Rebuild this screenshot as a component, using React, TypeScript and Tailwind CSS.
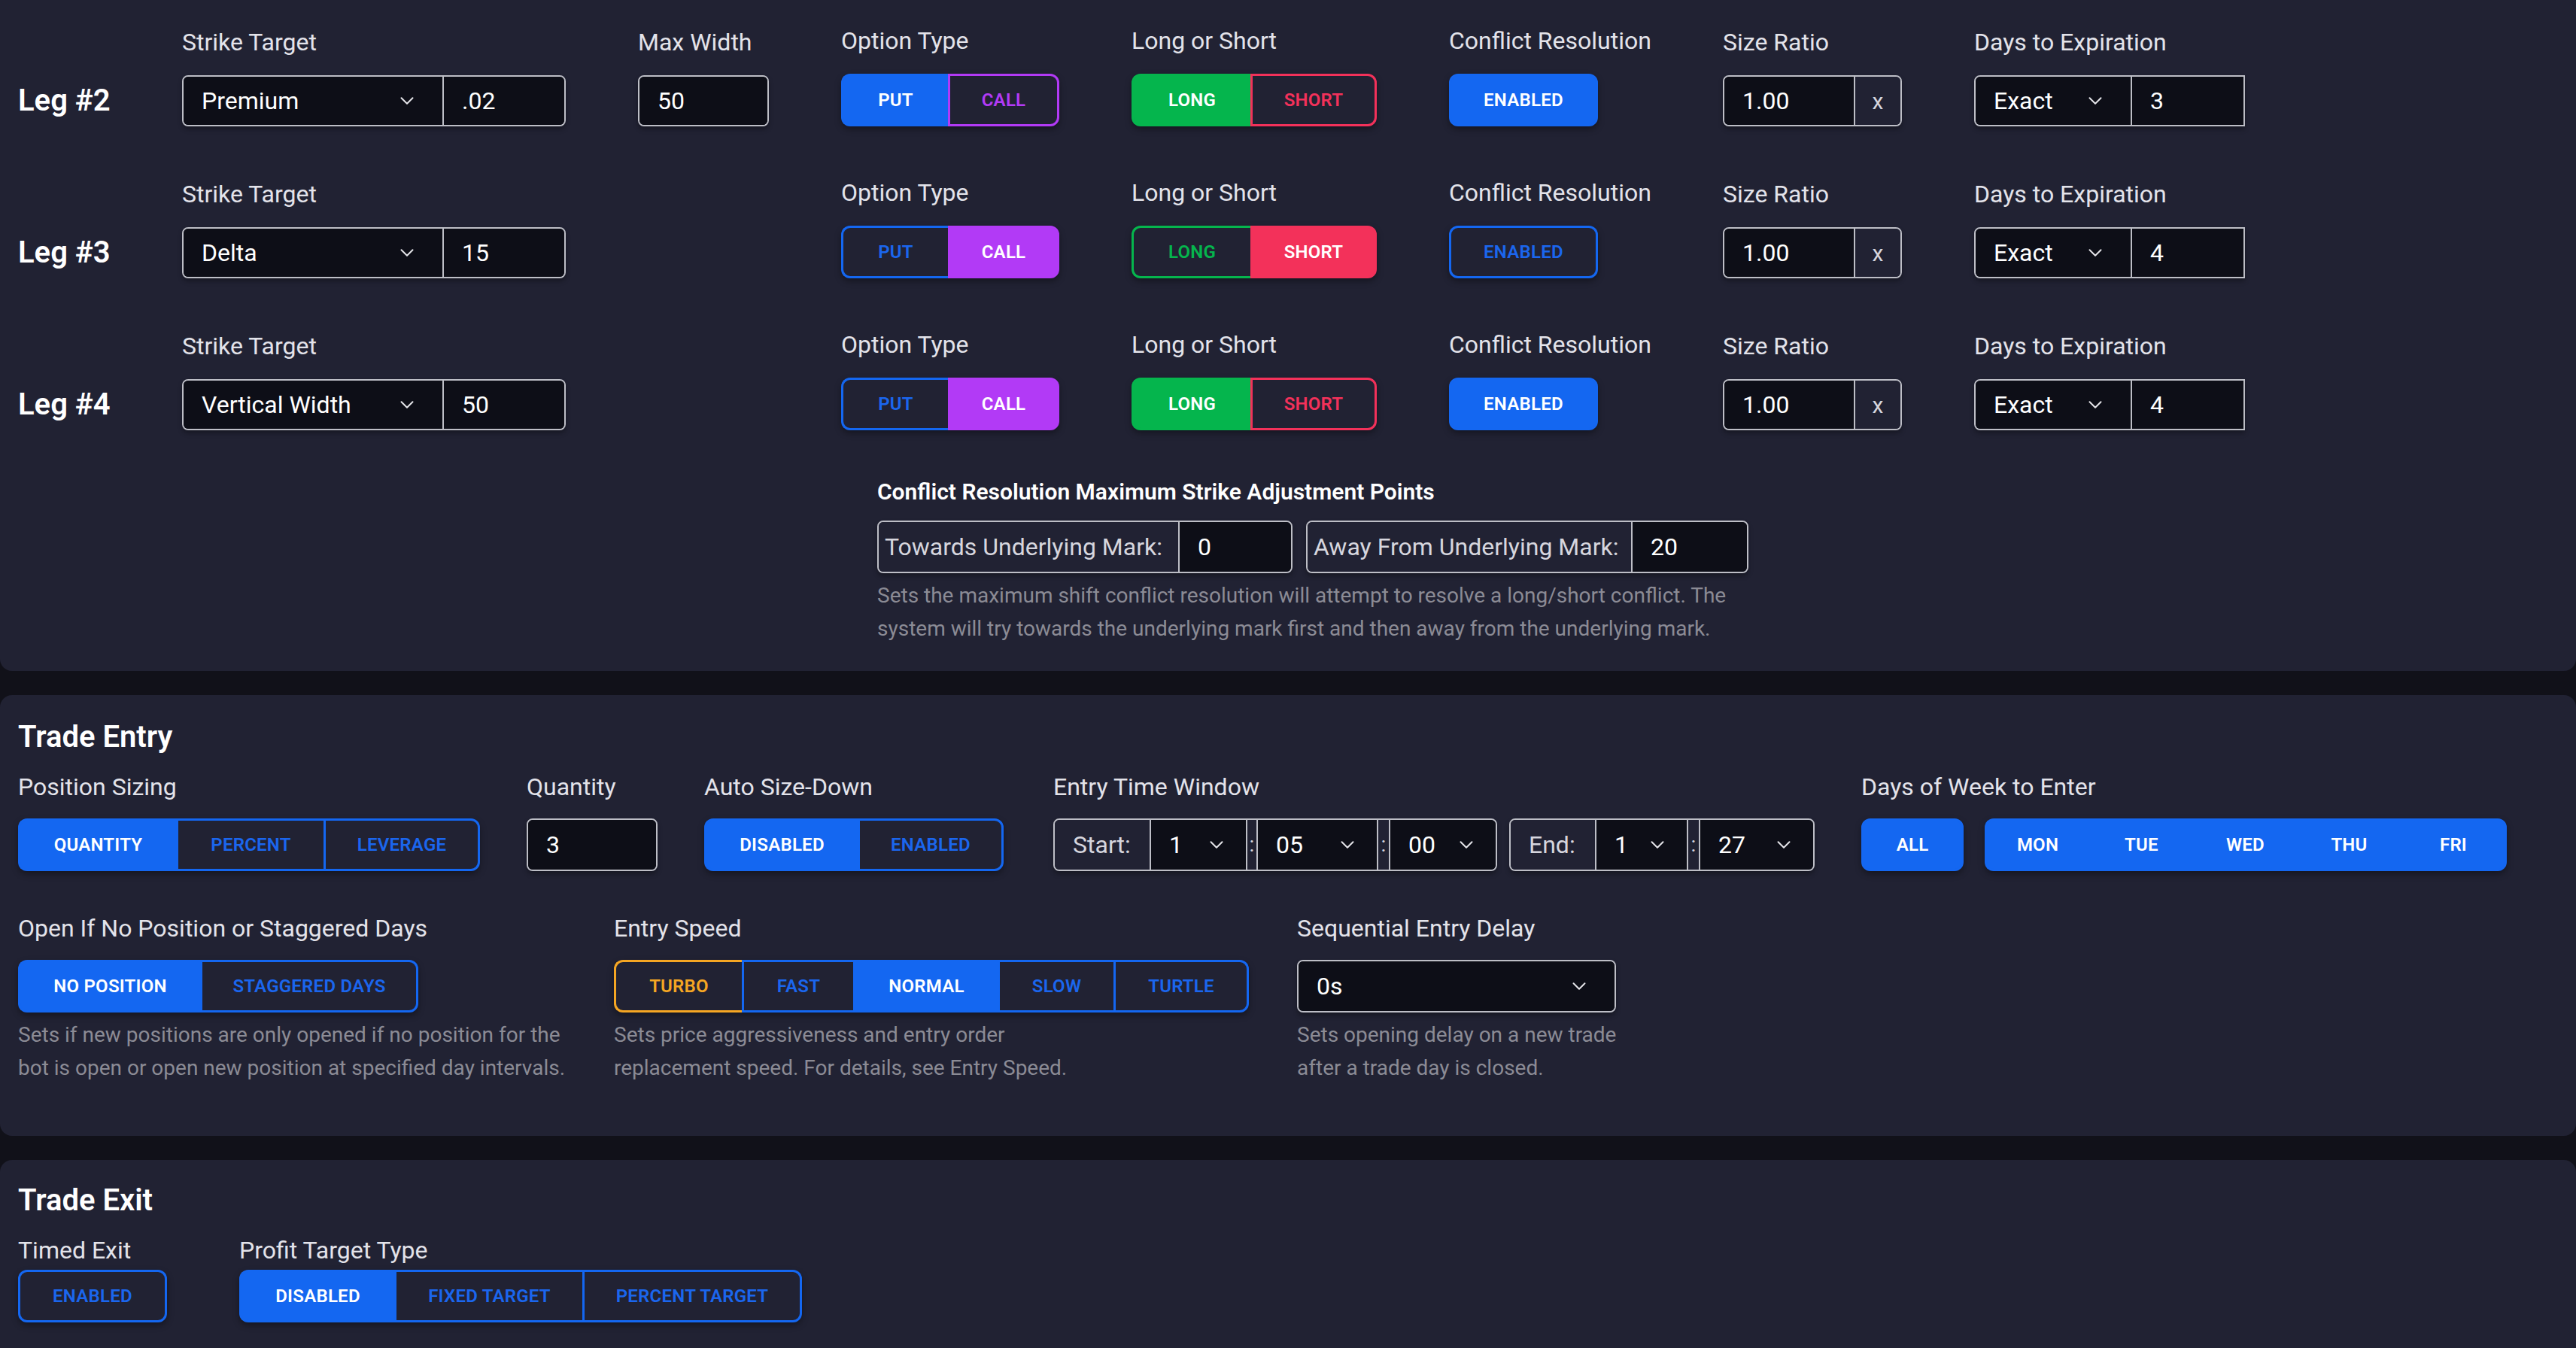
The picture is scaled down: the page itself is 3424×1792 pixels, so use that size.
import React from "react";
import { ChevronDown } from "lucide-react";

type V = "bf" | "bo" | "pf" | "po" | "gf" | "go" | "rf" | "ro" | "ao";
const VC: Record<V, string> = {
  bf: "bg-[#1467f1] border-[#1467f1] text-white",
  bo: "border-[#1467f1] text-[#1b66ee]",
  pf: "bg-[#b23af6] border-[#b23af6] text-white",
  po: "border-[#b23af6] text-[#b23af6]",
  gf: "bg-[#05b54d] border-[#05b54d] text-white",
  go: "border-[#05b54d] text-[#05b54d]",
  rf: "bg-[#f3315a] border-[#f3315a] text-white",
  ro: "border-[#f3315a] text-[#f3315a]",
  ao: "border-[#f5a623] text-[#f5a623]",
};

type Item = { t: string; v: V; w: string };

function Seg({ items, h = "h-[35px]" }: { items: Item[]; h?: string }) {
  return (
    <div className={`flex w-fit self-start ${h} rounded-md shadow-[0_2px_4px_rgba(0,0,0,0.35)]`}>
      {items.map((it, i) => {
        const first = i === 0;
        const last = i === items.length - 1;
        return (
          <div
            key={i}
            className={`flex items-center justify-center border-[1.5px] text-[12px] font-semibold tracking-[0.01em] ${it.w} ${VC[it.v]} ${first ? "rounded-l-md" : ""} ${last ? "rounded-r-md" : "border-r-0"}`}
          >
            {it.t}
          </div>
        );
      })}
    </div>
  );
}

function Label({ children, cls = "mb-[10px]" }: { children: React.ReactNode; cls?: string }) {
  return <div className={`text-[16px] leading-6 text-[#e3e3ea] whitespace-nowrap ${cls}`}>{children}</div>;
}

function Frame({ children, cls = "" }: { children: React.ReactNode; cls?: string }) {
  return (
    <div className={`flex h-[34px] rounded-[4px] border border-[#bdbec6] overflow-hidden shadow-[0_2px_3px_rgba(0,0,0,0.3)] ${cls}`}>
      {children}
    </div>
  );
}

function Sel({ v, w, pr = "pr-4", bl = "" }: { v: string; w: string; pr?: string; bl?: string }) {
  return (
    <div className={`flex items-center justify-between bg-[#0d0e17] pl-3 ${pr} text-[16px] text-white ${w} ${bl}`}>
      <span>{v}</span>
      <ChevronDown size={15} strokeWidth={1.6} className="text-[#e5e5ea]" />
    </div>
  );
}

function Num({ v, w }: { v: string; w: string }) {
  return (
    <div className={`flex items-center bg-[#0d0e17] pl-3 text-[16px] text-white border-l border-[#bdbec6] ${w}`}>{v}</div>
  );
}

function Addon({ t, w, cls = "" }: { t: string; w: string; cls?: string }) {
  return (
    <div className={`flex items-center bg-[#212233] text-[16px] text-[#d6d6de] ${w} ${cls}`}>{t}</div>
  );
}

function Colon({ w }: { w: string }) {
  return (
    <div className={`flex items-center justify-center ${w} bg-[#212233] text-[14px] text-[#d6d6de] border-l border-[#bdbec6]`}>:</div>
  );
}

type LegProps = {
  n: string;
  strike: string;
  sv: string;
  maxw?: string;
  put: boolean;
  long: boolean;
  conflict: boolean;
  dte: string;
};

function Leg({ n, strike, sv, maxw, put, long, conflict, dte }: LegProps) {
  return (
    <div className="flex items-end gap-12">
      <div className="flex items-center h-[34px] w-[61px] text-[20px] font-semibold text-white whitespace-nowrap">Leg #{n}</div>
      <div className="flex flex-col w-[255px]">
        <Label>Strike Target</Label>
        <Frame>
          <Sel v={strike} w="w-[172px]" />
          <Num v={sv} w="flex-1" />
        </Frame>
      </div>
      <div className="flex flex-col w-[87px]">
        {maxw !== undefined && (
          <>
            <Label>Max Width</Label>
            <Frame>
              <div className="flex items-center flex-1 bg-[#0d0e17] pl-3 text-[16px] text-white">{maxw}</div>
            </Frame>
          </>
        )}
      </div>
      <div className="flex flex-col w-[145px]">
        <Label>Option Type</Label>
        <Seg
          items={[
            { t: "PUT", v: put ? "bf" : "bo", w: "w-[71px]" },
            { t: "CALL", v: put ? "po" : "pf", w: "w-[74px]" },
          ]}
        />
      </div>
      <div className="flex flex-col w-[163px]">
        <Label>Long or Short</Label>
        <Seg
          items={[
            { t: "LONG", v: long ? "gf" : "go", w: "w-[79px]" },
            { t: "SHORT", v: long ? "ro" : "rf", w: "w-[84px]" },
          ]}
        />
      </div>
      <div className="flex flex-col w-[134px]">
        <Label>Conflict Resolution</Label>
        <Seg items={[{ t: "ENABLED", v: conflict ? "bf" : "bo", w: "w-[99px]" }]} />
      </div>
      <div className="flex flex-col w-[119px]">
        <Label>Size Ratio</Label>
        <Frame>
          <div className="flex items-center flex-1 bg-[#0d0e17] pl-3 text-[16px] text-white">1.00</div>
          <div className="flex items-center justify-center w-[31px] border-l border-[#bdbec6] bg-[#212233] text-[15px] text-[#d6d6de]">x</div>
        </Frame>
      </div>
      <div className="flex flex-col w-[180px]">
        <Label>Days to Expiration</Label>
        <Frame cls="rounded-r-none">
          <Sel v="Exact" w="w-[103px]" />
          <Num v={dte} w="flex-1" />
        </Frame>
      </div>
    </div>
  );
}

const helper = "text-[14px] leading-[22px] text-[#8b8b95] whitespace-nowrap";
const bl = "border-l border-[#bdbec6]";

export default function App() {
  return (
    <div className="[zoom:2] w-[1712px] min-h-[896px] bg-[#111119] [font-family:Roboto,'Noto_Sans',sans-serif] flex flex-col gap-[16px]">
      {/* Legs panel */}
      <div className="bg-[#212233] rounded-b-lg px-3 pt-[15px] pb-[17px]">
        <div className="flex flex-col gap-[32px]">
          <Leg n="2" strike="Premium" sv=".02" maxw="50" put long conflict dte="3" />
          <Leg n="3" strike="Delta" sv="15" put={false} long={false} conflict={false} dte="4" />
          <Leg n="4" strike="Vertical Width" sv="50" put={false} long conflict dte="4" />
        </div>
        <div className="ml-[571px] mt-[30px]">
          <div className="text-[15px] leading-[22px] font-semibold text-white">Conflict Resolution Maximum Strike Adjustment Points</div>
          <div className="flex gap-[9px] mt-2">
            <Frame cls="h-[35px]">
              <Addon t="Towards Underlying Mark:" w="w-[199px]" cls="pl-1" />
              <Num v="0" w="w-[75px]" />
            </Frame>
            <Frame cls="h-[35px]">
              <Addon t="Away From Underlying Mark:" w="w-[215px]" cls="pl-1" />
              <Num v="20" w="w-[77px]" />
            </Frame>
          </div>
          <div className={`${helper} mt-1`}>
            Sets the maximum shift conflict resolution will attempt to resolve a long/short conflict. The
            <br />
            system will try towards the underlying mark first and then away from the underlying mark.
          </div>
        </div>
      </div>

      {/* Trade Entry */}
      <div className="bg-[#212233] rounded-lg px-3 pt-[14px] pb-[34px]">
        <div className="text-[20px] leading-7 font-semibold text-white">Trade Entry</div>
        <div className="flex items-end gap-[31px] mt-[7px]">
          <div className="flex flex-col">
            <Label cls="mb-[9px]">Position Sizing</Label>
            <Seg
              items={[
                { t: "QUANTITY", v: "bf", w: "w-[105px]" },
                { t: "PERCENT", v: "bo", w: "w-[98px]" },
                { t: "LEVERAGE", v: "bo", w: "w-[104px]" },
              ]}
            />
          </div>
          <div className="flex flex-col">
            <Label cls="mb-[9px]">Quantity</Label>
            <Frame cls="w-[87px] h-[35px]">
              <div className="flex items-center flex-1 bg-[#0d0e17] pl-3 text-[16px] text-white">3</div>
            </Frame>
          </div>
          <div className="flex flex-col">
            <Label cls="mb-[9px]">Auto Size-Down</Label>
            <Seg
              items={[
                { t: "DISABLED", v: "bf", w: "w-[102px]" },
                { t: "ENABLED", v: "bo", w: "w-[97px]" },
              ]}
            />
          </div>
          <div className="flex flex-col ml-[2px]">
            <Label cls="mb-[9px]">Entry Time Window</Label>
            <div className="flex gap-2">
              <Frame cls="h-[35px]">
                <Addon t="Start:" w="w-[63px]" cls="pl-3" />
                <Sel v="1" w="w-[64px]" pr="pr-3" bl={bl} />
                <Colon w="w-[7px]" />
                <Sel v="05" w="w-[80px]" pr="pr-3" bl={bl} />
                <Colon w="w-[8px]" />
                <Sel v="00" w="w-[71px]" pr="pr-3" bl={bl} />
              </Frame>
              <Frame cls="h-[35px]">
                <Addon t="End:" w="w-[56px]" cls="pl-3" />
                <Sel v="1" w="w-[61px]" pr="pr-3" bl={bl} />
                <Colon w="w-[8px]" />
                <Sel v="27" w="w-[76px]" pr="pr-3" bl={bl} />
              </Frame>
            </div>
          </div>
          <div className="flex flex-col">
            <Label cls="mb-[9px]">Days of Week to Enter</Label>
            <div className="flex gap-[14px]">
              <Seg items={[{ t: "ALL", v: "bf", w: "w-[68px]" }]} />
              <Seg
                items={[
                  { t: "MON", v: "bf", w: "w-[69px]" },
                  { t: "TUE", v: "bf", w: "w-[69px]" },
                  { t: "WED", v: "bf", w: "w-[69px]" },
                  { t: "THU", v: "bf", w: "w-[69px]" },
                  { t: "FRI", v: "bf", w: "w-[71px]" },
                ]}
              />
            </div>
          </div>
        </div>

        <div className="flex gap-8 mt-[26px]">
          <div className="flex flex-col w-[364px]">
            <Label cls="mb-[9px]">Open If No Position or Staggered Days</Label>
            <Seg
              items={[
                { t: "NO POSITION", v: "bf", w: "w-[121px]" },
                { t: "STAGGERED DAYS", v: "bo", w: "w-[145px]" },
              ]}
            />
            <div className={`${helper} mt-1`}>
              Sets if new positions are only opened if no position for the
              <br />
              bot is open or open new position at specified day intervals.
            </div>
          </div>
          <div className="flex flex-col w-[422px]">
            <Label cls="mb-[9px]">Entry Speed</Label>
            <Seg
              items={[
                { t: "TURBO", v: "ao", w: "w-[85px]" },
                { t: "FAST", v: "bo", w: "w-[74px]" },
                { t: "NORMAL", v: "bf", w: "w-[96px]" },
                { t: "SLOW", v: "bo", w: "w-[77px]" },
                { t: "TURTLE", v: "bo", w: "w-[90px]" },
              ]}
            />
            <div className={`${helper} mt-1`}>
              Sets price aggressiveness and entry order
              <br />
              replacement speed. For details, see Entry Speed.
            </div>
          </div>
          <div className="flex flex-col w-[212px]">
            <Label cls="mb-[9px]">Sequential Entry Delay</Label>
            <Frame cls="h-[35px]">
              <Sel v="0s" w="flex-1" />
            </Frame>
            <div className={`${helper} mt-1`}>
              Sets opening delay on a new trade
              <br />
              after a trade day is closed.
            </div>
          </div>
        </div>
      </div>

      {/* Trade Exit */}
      <div className="bg-[#212233] rounded-t-lg px-3 pt-[13px] pb-[18px] flex-1">
        <div className="text-[20px] leading-7 font-semibold text-white">Trade Exit</div>
        <div className="flex items-end gap-12 mt-[7px]">
          <div className="flex flex-col">
            <Label cls="mb-[1px]">Timed Exit</Label>
            <Seg items={[{ t: "ENABLED", v: "bo", w: "w-[99px]" }]} />
          </div>
          <div className="flex flex-col">
            <Label cls="mb-[1px]">Profit Target Type</Label>
            <Seg
              items={[
                { t: "DISABLED", v: "bf", w: "w-[103px]" },
                { t: "FIXED TARGET", v: "bo", w: "w-[125px]" },
                { t: "PERCENT TARGET", v: "bo", w: "w-[146px]" },
              ]}
            />
          </div>
        </div>
      </div>
    </div>
  );
}
